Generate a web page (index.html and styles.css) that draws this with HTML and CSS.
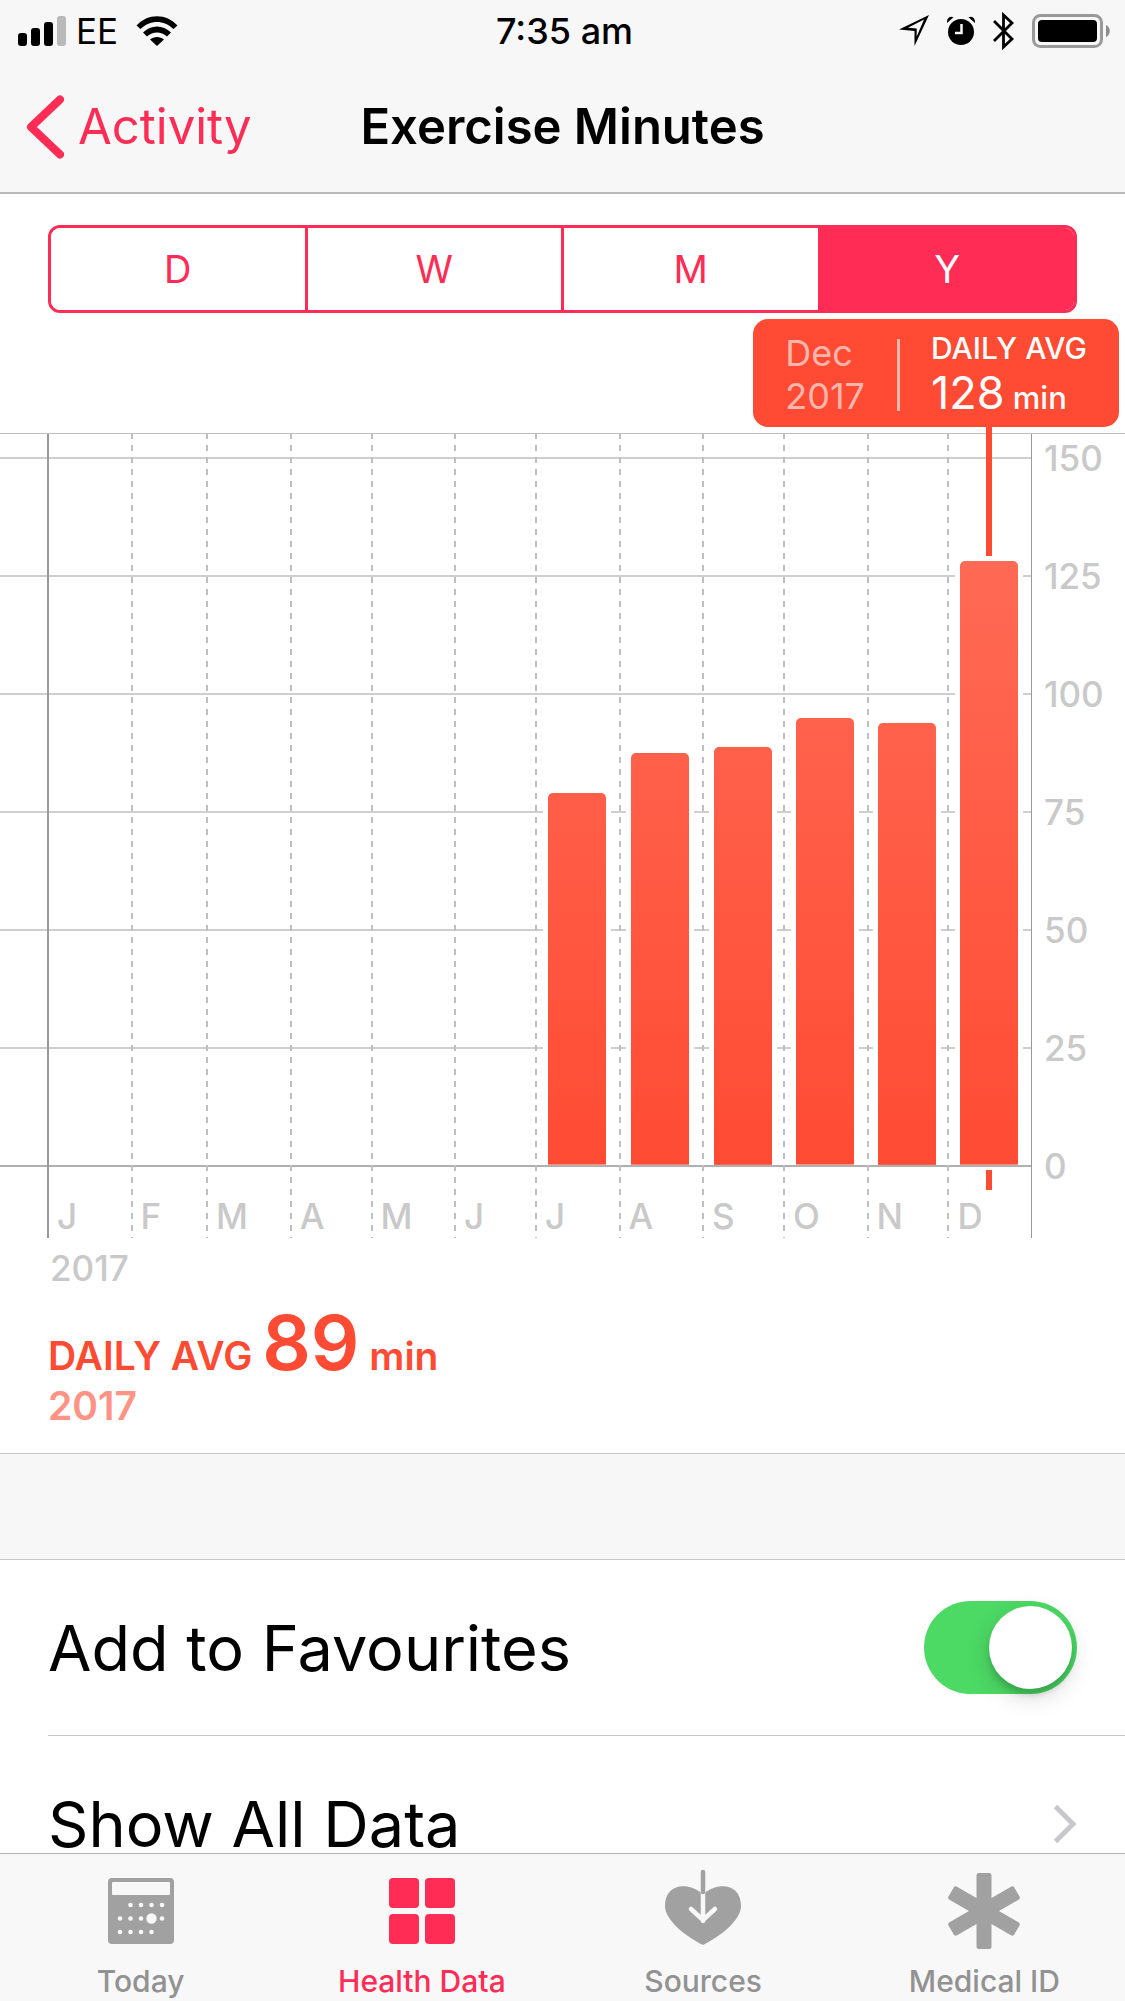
FILE: index.html
```html
<!DOCTYPE html>
<html lang="en-GB">
<head>
    <meta charset="UTF-8">
    <meta name="viewport" content="width=device-width, initial-scale=1.0">
    <title>Exercise Minutes</title>
    <link rel="stylesheet" href="styles.css">
</head>
<body>
    <header class="top">
        <div class="status-bar">
            <div class="status-left">
                <svg class="signal" width="48" height="30" viewBox="0 0 48 30">
                    <rect x="0" y="17" width="9" height="13" rx="3"/>
                    <rect x="13" y="12" width="9" height="18" rx="3"/>
                    <rect x="26" y="6" width="9" height="24" rx="3"/>
                    <rect x="39" y="0" width="9" height="30" rx="3" fill="#b9b9b9"/>
                </svg>
                <span class="carrier">EE</span>
                <svg class="wifi" width="42" height="30" viewBox="0 0 42 30">
                    <path d="M0.500 9.500C11.500 -3 30.500 -3 41.500 9.500L37.500 13C28 3.500 14 3.500 4.500 13Z"/>
                    <path d="M7 16.500C15 8.500 27 8.500 35 16.500L31 20.500C25 15 17 15 11 20.500Z"/>
                    <path d="M14 23.500C18 20 24 20 28 23.500L21 30Z"/>
                </svg>
            </div>
            <span class="clock">7:35 am</span>
            <div class="status-right">
                <svg width="30" height="31" viewBox="0 0 30 31">
                    <path fill-rule="evenodd" d="M30 0L15.500 31V16L0 14.500ZM25 4.500L9 12.800L17.700 13.600V21.500Z"/>
                </svg>
                <svg width="28" height="30" viewBox="0 0 28 30">
                    <circle cx="14" cy="16" r="13"/>
                    <path d="M0 7C-0.500 2 3 -0.500 6.500 1.200ZM28 7C28.500 2 25 -0.500 21.500 1.200Z"/>
                    <path d="M14.500 8V17H8" fill="none" stroke="#f7f7f7" stroke-width="2.500"/>
                </svg>
                <svg width="21" height="38" viewBox="0 0 21 38">
                    <path d="M1 9L19 27L10.500 35V3L19 11L1 29" fill="none" stroke="#000" stroke-width="2.800"/>
                </svg>
                <svg width="79" height="34" viewBox="0 0 79 34">
                    <rect x="1.500" y="1.500" width="68" height="31" rx="7" fill="none" stroke="#999" stroke-width="3"/>
                    <rect x="6" y="6" width="59" height="22" rx="4"/>
                    <path d="M74 11C79 13 79 21 74 23Z" fill="#8c8c8c"/>
                </svg>
            </div>
        </div>
        <nav class="nav-bar">
            <a href="#" class="back">
                <svg width="38" height="64" viewBox="0 0 38 64">
                    <path d="M34 4.500L5 32L34 59.500" fill="none" stroke="#ff2d55" stroke-width="8" stroke-linecap="round" stroke-linejoin="round"/>
                </svg>
                Activity
            </a>
            <h1 class="nav-title">Exercise Minutes</h1>
        </nav>
    </header>

    <main class="content">
        <div class="segments">
            <button type="button" class="segment">D</button>
            <button type="button" class="segment">W</button>
            <button type="button" class="segment">M</button>
            <button type="button" class="segment active" aria-pressed="true">Y</button>
        </div>

        <div class="callout-row">
            <div class="callout">
                <div class="callout-date">Dec<br>2017</div>
                <div class="callout-value">
                    <span class="callout-label">DAILY AVG</span>
                    <span class="callout-number">128<small> min</small></span>
                </div>
            </div>
        </div>

        <section class="chart">
            <div class="scale">
                <div class="scale-row"><span>150</span></div>
                <div class="scale-row"><span>125</span></div>
                <div class="scale-row"><span>100</span></div>
                <div class="scale-row"><span>75</span></div>
                <div class="scale-row"><span>50</span></div>
                <div class="scale-row"><span>25</span></div>
                <div class="scale-row zero"><span>0</span></div>
            </div>
            <div class="months">
                <div class="month"><div class="plot"></div><span>J</span></div>
                <div class="month"><div class="plot"></div><span>F</span></div>
                <div class="month"><div class="plot"></div><span>M</span></div>
                <div class="month"><div class="plot"></div><span>A</span></div>
                <div class="month"><div class="plot"></div><span>M</span></div>
                <div class="month"><div class="plot"></div><span>J</span></div>
                <div class="month"><div class="plot"><div class="bar" style="--minutes: 78.8"></div></div><span>J</span></div>
                <div class="month"><div class="plot"><div class="bar" style="--minutes: 87.3"></div></div><span>A</span></div>
                <div class="month"><div class="plot"><div class="bar" style="--minutes: 88.6"></div></div><span>S</span></div>
                <div class="month"><div class="plot"><div class="bar" style="--minutes: 94.7"></div></div><span>O</span></div>
                <div class="month"><div class="plot"><div class="bar" style="--minutes: 93.7"></div></div><span>N</span></div>
                <div class="month"><div class="plot"><div class="bar selected" style="--minutes: 128"></div></div><span>D</span></div>
            </div>
        </section>
        <p class="chart-year">2017</p>

        <section class="summary">
            <p class="summary-value">DAILY AVG <strong>89</strong> min</p>
            <p class="summary-year">2017</p>
        </section>

        <div class="options">
            <div class="option">
                <label for="favourite">Add to Favourites</label>
                <input type="checkbox" role="switch" id="favourite" class="switch" checked>
            </div>
            <a href="#" class="option">
                Show All Data
                <svg width="24" height="40" viewBox="0 0 24 40">
                    <path d="M2.500 2.500L20 20L2.500 37.500" fill="none" stroke="#c7c7cc" stroke-width="5"/>
                </svg>
            </a>
        </div>
    </main>

    <nav class="tab-bar">
        <a href="#" class="tab">
            <svg width="76" height="80" viewBox="0 0 76 80">
                <rect x="5" y="9" width="66" height="66" rx="4"/>
                <rect x="9" y="13" width="58" height="13" rx="1" fill="#f8f8f8"/>
                <g fill="#f8f8f8">
                    <circle cx="27.500" cy="36" r="2.300"/><circle cx="38" cy="36" r="2.300"/><circle cx="48.500" cy="36" r="2.300"/><circle cx="59" cy="36" r="2.300"/>
                    <circle cx="17" cy="49.500" r="2.300"/><circle cx="27.500" cy="49.500" r="2.300"/><circle cx="38" cy="49.500" r="2.300"/><circle cx="48.500" cy="49.500" r="5.200"/><circle cx="59" cy="49.500" r="2.300"/>
                    <circle cx="17" cy="63" r="2.300"/><circle cx="27.500" cy="63" r="2.300"/><circle cx="38" cy="63" r="2.300"/><circle cx="48.500" cy="63" r="2.300"/>
                </g>
            </svg>
            Today
        </a>
        <a href="#" class="tab active">
            <svg width="76" height="80" viewBox="0 0 76 80">
                <rect x="5" y="9" width="30" height="30" rx="4"/>
                <rect x="41" y="9" width="30" height="30" rx="4"/>
                <rect x="5" y="45" width="30" height="30" rx="4"/>
                <rect x="41" y="45" width="30" height="30" rx="4"/>
            </svg>
            Health Data
        </a>
        <a href="#" class="tab">
            <svg width="76" height="80" viewBox="0 0 76 80">
                <path d="M38 76C20 67 0 51 0 37C0 15 22 12 38 25C54 12 76 15 76 37C76 51 56 67 38 76Z"/>
                <path d="M38 23V52M26 40L38 51L50 40" fill="none" stroke="#f8f8f8" stroke-width="4.500" stroke-linecap="round" stroke-linejoin="round"/>
                <path d="M38 3V23" stroke="#a1a1a1" stroke-width="4.500" stroke-linecap="round"/>
            </svg>
            Sources
        </a>
        <a href="#" class="tab">
            <svg width="76" height="80" viewBox="0 0 76 80">
                <rect x="30.500" y="4" width="15" height="76" rx="2.500"/>
                <rect x="30.500" y="4" width="15" height="76" rx="2.500" transform="rotate(60 38 42)"/>
                <rect x="30.500" y="4" width="15" height="76" rx="2.500" transform="rotate(-60 38 42)"/>
            </svg>
            Medical ID
        </a>
    </nav>
</body>
</html>
```
FILE: styles.css
```css
* {
    margin: 0;
    padding: 0;
    box-sizing: border-box;
}

body {
    font-family: Inter, 'Liberation Sans', sans-serif;
    background: #fff;
    color: #000;
    height: 100vh;
    display: flex;
    flex-direction: column;
}

a {
    color: inherit;
    text-decoration: none;
}

svg {
    display: block;
    flex: none;
}

/* Status bar and navigation */
.top {
    flex: none;
    background: #f7f7f7;
    border-bottom: 2px solid #b8b8b8;
}

.status-bar {
    display: grid;
    grid-template-columns: 1fr auto 1fr;
    align-items: center;
    height: 61px;
    padding: 0 14px 0 18px;
    font-size: 35px;
}

.status-left,
.status-right {
    display: flex;
    align-items: center;
}

.carrier {
    margin: 0 18px 0 10px;
}

.clock {
    font-size: 36px;
    font-weight: 500;
}

.status-right {
    justify-content: flex-end;
    gap: 18px;
}

.nav-bar {
    display: grid;
    grid-template-columns: 1fr auto 1fr;
    align-items: center;
    height: 131px;
    padding: 0 26px;
    font-size: 49px;
}

.back {
    display: flex;
    align-items: center;
    gap: 14px;
    color: #ff2d55;
}

.nav-title {
    font-size: 49px;
    font-weight: 600;
}

/* Scrolling content */
.content {
    flex: 1;
    min-height: 0;
    overflow-y: auto;
    scrollbar-width: none;
}

.segments {
    display: flex;
    margin: 31px 48px 0;
    border: 3px solid #ff2d55;
    border-radius: 12px;
    overflow: hidden;
}

.segment {
    flex: 1;
    height: 82px;
    border: none;
    border-left: 3px solid #ff2d55;
    background: #fff;
    color: #ff2d55;
    font-family: inherit;
    font-size: 38px;
}

.segment:first-child {
    border-left: none;
}

.segment.active {
    background: #ff2d55;
    color: #fff;
}

.callout-row {
    display: flex;
    justify-content: flex-end;
    height: 120px;
    padding: 6px 6px 0 0;
}

.callout {
    display: flex;
    align-items: center;
    height: 108px;
    padding: 4px 32px 0;
    border-radius: 15px;
    background: #ff4b33;
    color: #fff;
}

.callout-date {
    padding-right: 32px;
    color: #ffb7ad;
    font-size: 36px;
    line-height: 43px;
}

.callout-value {
    display: flex;
    flex-direction: column;
    height: 72px;
    justify-content: center;
    padding-left: 31px;
    border-left: 3px solid #ffb7ad;
}

.callout-label {
    font-size: 30px;
    font-weight: 500;
    line-height: 36px;
}

.callout-number {
    font-size: 45px;
    line-height: 54px;
}

.callout-number small {
    font-size: 31px;
    font-weight: 500;
    line-height: 36px;
}

/* Chart: the scale and the months share one grid cell */
.chart {
    display: grid;
    border-top: 1px solid #bfbfbf;
    color: #c9c9c9;
    font-size: 35px;
    font-weight: 500;
}

.scale,
.months {
    grid-area: 1 / 1;
}

.scale {
    padding-top: 23px;
}

.scale-row {
    display: grid;
    grid-template-columns: 1fr 94px;
    height: 118px;
    line-height: 44px;
}

.scale-row::before {
    content: "";
    height: 2px;
    background: #cfcfcf;
}

.scale-row span {
    margin-top: -21px;
    padding-left: 13px;
}

.scale-row.zero {
    height: 73px;
}

.scale-row.zero::before {
    background: #b0b0b0;
}

/* column widths follow the days in each month */
.months {
    display: grid;
    grid-template-columns: 31fr 28fr 31fr 30fr 31fr 30fr 31fr 31fr 30fr 31fr 30fr 31fr;
    margin: 0 93px 0 47px;
    border-right: 1px solid #999;
}

.month {
    display: flex;
    flex-direction: column;
    background: repeating-linear-gradient(#bfbfbf 0 5px, transparent 5px 11px, #bfbfbf 11px 12px) left top / 2px 100% no-repeat;
}

.month:first-child {
    background: linear-gradient(#999, #999) left top / 2px 100% no-repeat;
}

.month span {
    height: 73px;
    padding: 29px 0 0 10px;
    line-height: 44px;
}

.plot {
    display: flex;
    align-items: flex-end;
    justify-content: center;
    height: 731px;
}

.bar {
    position: relative;
    width: 58px;
    height: calc(var(--minutes) / 155 * 100%);
    border-radius: 5px 5px 0 0;
    background: linear-gradient(#ff6a55, #ff4b33) bottom / 100% 604px no-repeat;
    box-shadow: 0 -5px 0 #fff, -5px 0 0 #fff, 5px 0 0 #fff;
}

/* marker line from the callout through the selected bar */
.bar.selected::before,
.bar.selected::after {
    content: "";
    position: absolute;
    left: 26px;
    width: 6px;
    background: #ff4b33;
}

.bar.selected::before {
    bottom: calc(100% + 5px);
    height: 129px;
}

.bar.selected::after {
    top: calc(100% + 5px);
    height: 20px;
}

.chart-year {
    padding: 8px 50px 0;
    color: #c9c9c9;
    font-size: 35px;
    font-weight: 500;
    line-height: 44px;
}

.summary {
    padding: 11px 48px 24px;
    border-bottom: 1px solid #c8c7cc;
    color: #ff4b33;
    font-size: 39px;
    font-weight: 600;
}

.summary-value {
    line-height: 46px;
}

.summary-value strong {
    font-size: 76px;
    font-weight: 600;
    line-height: 82px;
}

.summary-year {
    color: #ff9385;
    line-height: 46px;
}

.options {
    border-top: 105px solid #f7f7f7;
}

.option {
    display: flex;
    align-items: center;
    justify-content: space-between;
    height: 176px;
    margin-left: 48px;
    padding-right: 48px;
    border-bottom: 1px solid #c8c7cc;
    font-size: 63px;
}

.options::before {
    content: "";
    display: block;
    height: 1px;
    background: #c8c7cc;
}

.switch {
    appearance: none;
    display: flex;
    width: 153px;
    height: 93px;
    padding: 5px;
    border-radius: 47px;
    background: #e5e5ea;
}

.switch::before {
    content: "";
    width: 83px;
    height: 83px;
    border-radius: 50%;
    background: #fff;
    box-shadow: 0 8px 24px rgba(0, 0, 0, 0.15), 0 6px 6px rgba(0, 0, 0, 0.15);
}

.switch:checked {
    justify-content: flex-end;
    background: #4cd964;
}

/* Tab bar */
.tab-bar {
    flex: none;
    display: grid;
    grid-template-columns: repeat(4, 1fr);
    height: 148px;
    padding-top: 15px;
    border-top: 1px solid #b2b2b2;
    background: #f8f8f8;
}

.tab {
    display: flex;
    flex-direction: column;
    align-items: center;
    gap: 14px;
    color: #929292;
    font-size: 30px;
    font-weight: 500;
    line-height: 36px;
}

.tab svg {
    fill: #a1a1a1;
}

.tab.active {
    color: #ff2d55;
}

.tab.active svg {
    fill: #ff2d55;
}
```
